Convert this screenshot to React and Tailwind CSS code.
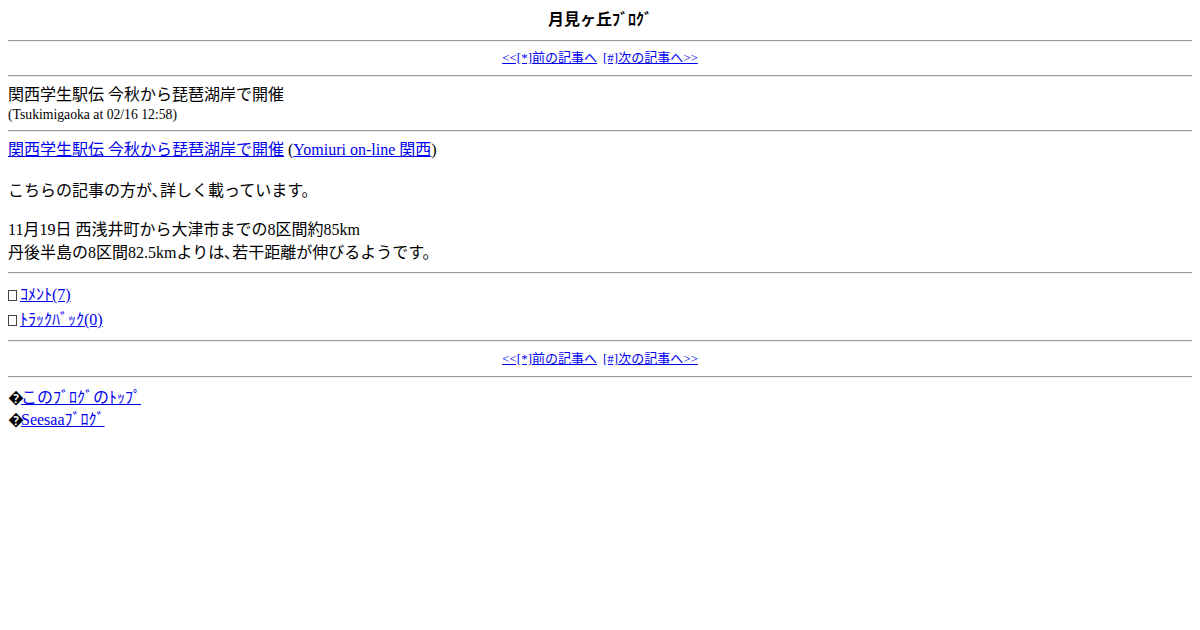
import React from 'react';

const font = { fontFamily: '"Liberation Serif", "Noto Sans CJK JP", serif' };

const Rule = ({ className = '' }) => (
  <div className={`h-0 border-t border-t-[#9a9a9a] border-b border-b-[#eeeeee] ${className}`}></div>
);

const Nav = ({ className = '' }) => (
  <div className={`text-center text-[13px] leading-[16px] ${className}`}>
    <a href="#" className="text-[#0000ee] underline">&lt;&lt;[*]前の記事へ</a>
    <span className="inline-block w-[6px]"></span>
    <a href="#" className="text-[#0000ee] underline">[#]次の記事へ&gt;&gt;</a>
  </div>
);

const Box = () => (
  <span className="inline-block w-[9px] h-[11px] border border-[#444] mr-[3px] align-[-1px]"></span>
);

export default function App() {
  return (
    <div className="min-h-[630px] bg-white text-black px-2 text-[16px]" style={font}>
      {/* Header */}
      <div className="pt-[11px] text-center font-bold leading-[18px]">月見ヶ丘ﾌﾞﾛｸﾞ</div>
      <Rule className="mt-[11px]" />
      <Nav className="mt-[8px]" />
      <Rule className="mt-[9px]" />

      {/* Entry title */}
      <div className="mt-[8px] leading-[19px]">関西学生駅伝 今秋から琵琶湖岸で開催</div>
      <div className="pt-[1px] text-[13.7px] leading-[19px]">(Tsukimigaoka at 02/16 12:58)</div>
      <Rule className="mt-[6px]" />

      {/* Body */}
      <div className="mt-[8px] leading-[19px]">
        <a href="#" className="text-[#0000ee] underline">関西学生駅伝 今秋から琵琶湖岸で開催</a>{' '}
        (<a href="#" className="text-[#0000ee] underline">Yomiuri on-line 関西</a>)
      </div>
      <div className="mt-[22px] leading-[19px]">こちらの記事の方が､詳しく載っています。</div>
      <div className="mt-[18px] leading-[23px]">
        11月19日 西浅井町から大津市までの8区間約85km
        <br />
        丹後半島の8区間82.5kmよりは､若干距離が伸びるようです。
      </div>
      <Rule className="mt-[8px]" />

      {/* Comments / trackbacks */}
      <div className="mt-[8px] leading-[25px]">
        <div>
          <Box />
          <a href="#" className="text-[#0000ee] underline">ｺﾒﾝﾄ(7)</a>
        </div>
        <div>
          <Box />
          <a href="#" className="text-[#0000ee] underline">ﾄﾗｯｸﾊﾞｯｸ(0)</a>
        </div>
      </div>
      <Rule className="mt-[8px]" />
      <Nav className="mt-[9px]" />
      <Rule className="mt-[9px]" />

      {/* Footer links */}
      <div className="mt-[9px] leading-[22px]">
        <div>
          <span className="tracking-[-3px]">�</span>
          <a href="#" className="text-[#0000ee] underline">このﾌﾞﾛｸﾞのﾄｯﾌﾟ</a>
        </div>
        <div>
          <span className="tracking-[-3px]">�</span>
          <a href="#" className="text-[#0000ee] underline">Seesaaﾌﾞﾛｸﾞ</a>
        </div>
      </div>
    </div>
  );
}
